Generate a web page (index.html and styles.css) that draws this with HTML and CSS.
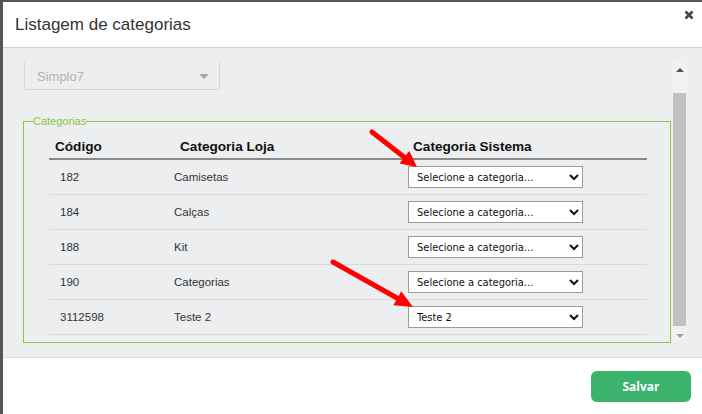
FILE: index.html
```html
<!DOCTYPE html>
<html lang="pt-BR">
<head>
<meta charset="utf-8">
<meta name="viewport" content="width=device-width, initial-scale=1">
<title>Listagem de categorias</title>
<link rel="stylesheet" href="styles.css">
</head>
<body>
<div class="modal">
  <div class="modal-header">
    <h4>Listagem de categorias</h4>
    <button type="button" class="close">
      <svg viewBox="0 0 10 10"><path d="M1.5 1.5L8.5 8.5M8.5 1.5L1.5 8.5"/></svg>
    </button>
  </div>

  <div class="modal-body">
    <div class="lista">
      <div class="lista-conteudo">
        <div class="fake-select">Simplo7<span class="caret"></span></div>

        <fieldset>
          <legend>Categorias</legend>
          <table>
            <thead>
              <tr>
                <th class="col-cod">Código</th>
                <th class="col-loja">Categoria Loja</th>
                <th class="col-sis">Categoria Sistema</th>
              </tr>
            </thead>
            <tbody>
              <tr>
                <td>182</td>
                <td>Camisetas</td>
                <td><select><option>Selecione a categoria...</option></select></td>
              </tr>
              <tr>
                <td>184</td>
                <td>Calças</td>
                <td><select><option>Selecione a categoria...</option></select></td>
              </tr>
              <tr>
                <td>188</td>
                <td>Kit</td>
                <td><select><option>Selecione a categoria...</option></select></td>
              </tr>
              <tr>
                <td>190</td>
                <td>Categorias</td>
                <td><select><option>Selecione a categoria...</option></select></td>
              </tr>
              <tr>
                <td>3112598</td>
                <td>Teste 2</td>
                <td><select><option>Teste 2</option></select></td>
              </tr>
            </tbody>
          </table>
        </fieldset>
      </div>

      <!-- barra de rolagem -->
      <div class="scrollbar">
        <div class="sb-btn"><span class="sb-up"></span></div>
        <div class="sb-track"><div class="sb-thumb"></div></div>
        <div class="sb-btn"><span class="sb-down"></span></div>
      </div>
    </div>
  </div>

  <div class="modal-footer">
    <button type="button" class="btn-salvar">Salvar</button>
  </div>
</div>

<!-- setas de anotacao -->
<svg class="arrows" viewBox="0 0 702 414">
  <line x1="372" y1="132" x2="404" y2="157"/>
  <polygon points="417,167 399.5,163.5 409.3,150.9"/>
  <line x1="333" y1="262" x2="397" y2="298"/>
  <polygon points="413,307 393.4,305.2 401.2,291.2"/>
</svg>
</body>
</html>
```

FILE: styles.css
```css
body {
  margin: 0;
  background-color: #555;
  font-family: "Liberation Sans", Arial, sans-serif;
  color: #333;
  overflow: hidden;
}
.modal {
  margin: 2px 0 0 3px;
  height: 412px;
  background-color: white;
}
.modal-header {
  display: flex;
  justify-content: space-between;
  align-items: flex-start;
  height: 45px;
  padding: 0 8px 0 12px;
  border-bottom: 1px solid #cfcfcf;
}
.modal-header h4 {
  margin: 0;
  font-size: 17px;
  font-weight: normal;
  line-height: 45px;
  color: #333;
}
.close {
  margin-top: 8px;
  padding: 0;
  width: 10px;
  height: 10px;
  border: none;
  background: none;
  cursor: pointer;
}
.close svg {
  display: block;
  width: 10px;
  height: 10px;
  stroke: #444;
  stroke-width: 2.6;
}
.modal-body {
  background-color: #edeef0;
  padding: 14px 15px 14px 10px;
  border-bottom: 1px solid #dcdcdc;
}
.lista {
  display: flex;
  height: 281px;
}
.lista-conteudo {
  flex: 1;
  overflow: hidden;
}
.scrollbar {
  display: flex;
  flex-direction: column;
  width: 15px;
  background-color: #f1f1f1;
}
.sb-btn {
  display: flex;
  align-items: center;
  justify-content: center;
  height: 15px;
}
.sb-up {
  border-left: 4px solid transparent;
  border-right: 4px solid transparent;
  border-bottom: 4px solid #505050;
}
.sb-down {
  border-left: 4px solid transparent;
  border-right: 4px solid transparent;
  border-top: 4px solid #a3a3a3;
}
.sb-track {
  flex: 1;
  display: flex;
  flex-direction: column;
  justify-content: flex-end;
  padding: 0 1px 2px 1px;
}
.sb-thumb {
  height: 233px;
  background-color: #c1c1c1;
}
.fake-select {
  display: flex;
  align-items: center;
  justify-content: space-between;
  box-sizing: border-box;
  width: 196px;
  height: 34px;
  margin: -6px 0 0 11px;
  padding: 6px 10px 0 12px;
  border: 1px solid #d6d7d9;
  color: #b3b3b3;
  font-size: 13px;
}
.caret {
  width: 0;
  height: 0;
  border-left: 5px solid transparent;
  border-right: 5px solid transparent;
  border-top: 5px solid #a5a5a5;
}
fieldset {
  margin: 25px 1px 0 10px;
  padding: 0 22px 7px 9px;
  border: 1px solid #92c440;
}
legend {
  padding: 0;
  font-size: 11px;
  line-height: 12px;
  color: #8cc63e;
}
table {
  width: 598px;
  margin: 7px 0 0 16px;
  border-collapse: collapse;
}
th {
  height: 24px;
  padding: 0;
  text-align: left;
  font-size: 13.6px;
  color: #111;
  border-bottom: 2px solid #888;
  vertical-align: middle;
}
.col-cod {
  width: 108px;
  padding-left: 6px;
}
.col-loja {
  width: 217px;
  padding-left: 17px;
}
.col-sis {
  padding-left: 16px;
}
td {
  height: 34px;
  padding: 0 11px;
  font-size: 11.5px;
  color: #333;
  border-bottom: 1px solid #d9dadc;
}
select {
  display: block;
  width: 175px;
  height: 22px;
  padding: 0 4px;
  border: 1px solid #9a9a9a;
  border-radius: 0;
  background-color: white;
  color: #111;
  font-family: "DejaVu Sans Condensed", "Liberation Sans", sans-serif;
  font-size: 11px;
}
.modal-footer {
  display: flex;
  justify-content: flex-end;
  padding: 13px 11px 0 0;
}
.btn-salvar {
  width: 100px;
  height: 31px;
  border: none;
  border-radius: 6px;
  background-color: #3cb36d;
  color: white;
  font-family: "Open Sans", sans-serif;
  font-weight: bold;
  font-size: 12px;
  cursor: pointer;
}
.arrows {
  position: absolute;
  top: 0;
  left: 0;
  width: 702px;
  height: 414px;
  pointer-events: none;
}
.arrows line {
  stroke: #ff0000;
  stroke-width: 5;
  stroke-linecap: round;
}
.arrows polygon {
  fill: #ff0000;
}
```
